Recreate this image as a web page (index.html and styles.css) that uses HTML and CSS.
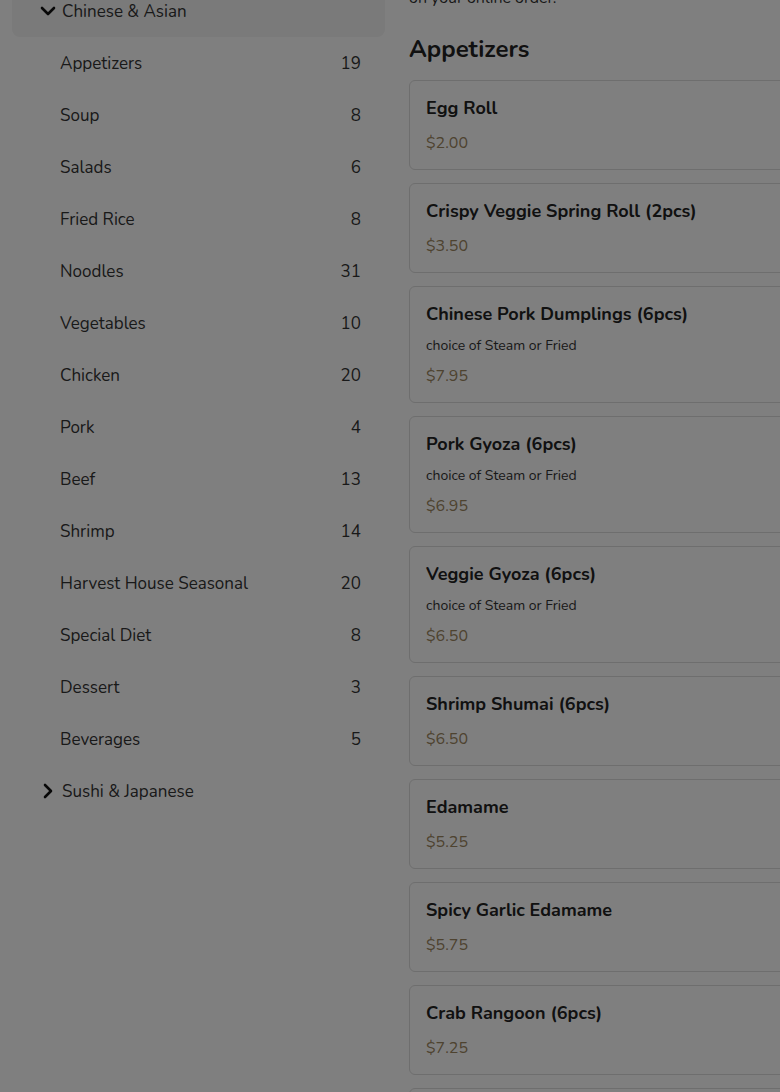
FILE: index.html
```html
<!DOCTYPE html>
<html lang="en">
<head>
<meta charset="utf-8">
<title>Menu</title>
<link rel="stylesheet" href="styles.css">
</head>
<body>
<div class="layout">
  <aside class="sidebar">
    <div class="group-head open">
      <svg class="chev" width="16" height="10" viewBox="0 0 16 10"><path d="M2 2 L8 8 L14 2" fill="none" stroke="#111" stroke-width="2.6" stroke-linecap="round" stroke-linejoin="round"/></svg>
      <span>Chinese &amp; Asian</span>
    </div>
    <ul class="cats">
      <li><span>Appetizers</span><span>19</span></li>
      <li><span>Soup</span><span>8</span></li>
      <li><span>Salads</span><span>6</span></li>
      <li><span>Fried Rice</span><span>8</span></li>
      <li><span>Noodles</span><span>31</span></li>
      <li><span>Vegetables</span><span>10</span></li>
      <li><span>Chicken</span><span>20</span></li>
      <li><span>Pork</span><span>4</span></li>
      <li><span>Beef</span><span>13</span></li>
      <li><span>Shrimp</span><span>14</span></li>
      <li><span>Harvest House Seasonal</span><span>20</span></li>
      <li><span>Special Diet</span><span>8</span></li>
      <li><span>Dessert</span><span>3</span></li>
      <li><span>Beverages</span><span>5</span></li>
    </ul>
    <div class="group-head">
      <svg class="chev right" width="16" height="16" viewBox="0 0 16 16"><path d="M5 2 L11 8 L5 14" fill="none" stroke="#111" stroke-width="2.6" stroke-linecap="round" stroke-linejoin="round"/></svg>
      <span>Sushi &amp; Japanese</span>
    </div>
  </aside>
  <main class="menu">
    <p class="note">Please let us know about any allergies or special requests<br>on your online order.</p>
    <h2>Appetizers</h2>
    <div class="items">
      <div class="card"><h3>Egg Roll</h3><div class="price">$2.00</div></div>
      <div class="card"><h3>Crispy Veggie Spring Roll (2pcs)</h3><div class="price">$3.50</div></div>
      <div class="card"><h3>Chinese Pork Dumplings (6pcs)</h3><p class="desc">choice of Steam or Fried</p><div class="price">$7.95</div></div>
      <div class="card"><h3>Pork Gyoza (6pcs)</h3><p class="desc">choice of Steam or Fried</p><div class="price">$6.95</div></div>
      <div class="card"><h3>Veggie Gyoza (6pcs)</h3><p class="desc">choice of Steam or Fried</p><div class="price">$6.50</div></div>
      <div class="card"><h3>Shrimp Shumai (6pcs)</h3><div class="price">$6.50</div></div>
      <div class="card"><h3>Edamame</h3><div class="price">$5.25</div></div>
      <div class="card"><h3>Spicy Garlic Edamame</h3><div class="price">$5.75</div></div>
      <div class="card"><h3>Crab Rangoon (6pcs)</h3><div class="price">$7.25</div></div>
      <div class="card"><h3>Chicken Wings (6pcs)</h3><div class="price">$8.95</div></div>
    </div>
  </main>
</div>
<div class="overlay"></div>
</body>
</html>
```
FILE: styles.css
```css
html, body {
  margin: 0;
  padding: 0;
  background: #fff;
  overflow: hidden;
  height: 100%;
}
body {
  font-family: "Nunito", "Lato", "Noto Sans", sans-serif;
  color: #333;
}
.layout {
  display: flex;
  align-items: flex-start;
  width: 1100px;
}
.sidebar {
  width: 373px;
  margin-left: 12px;
  margin-top: -15px;
  flex: none;
}
.group-head {
  height: 52px;
  display: flex;
  align-items: center;
  padding-left: 28px;
  gap: 6px;
  font-size: 17px;
  color: #333;
  box-sizing: border-box;
}
.group-head.open {
  background: #f4f4f4;
  border-radius: 0 0 8px 8px;
}
.chev { flex: none; }
.cats {
  list-style: none;
  margin: 0;
  padding: 0;
}
.cats li {
  height: 52px;
  display: flex;
  align-items: center;
  justify-content: space-between;
  padding: 0 24px 0 48px;
  font-size: 17px;
  color: #333;
}
.menu {
  margin-left: 24px;
  margin-top: -38px;
  width: 700px;
  flex: none;
}
.note {
  margin: 0;
  font-size: 16px;
  line-height: 24px;
}
h2 {
  margin: 23px 0 15px;
  font-size: 24px;
  line-height: 32px;
  font-weight: 700;
  color: #222;
}
.items {
  display: flex;
  flex-direction: column;
  gap: 13px;
}
.card {
  border: 1px solid #dcdcdc;
  border-radius: 6px;
  padding: 15px 16px 15px;
}
.card h3 {
  margin: 0;
  font-size: 18px;
  line-height: 24px;
  font-weight: 700;
  color: #222;
}
.desc {
  margin: 10px 0 0;
  font-size: 14px;
  line-height: 20px;
  color: #333;
}
.price {
  margin-top: 12px;
  font-size: 16px;
  line-height: 22px;
  color: #9c8660;
}
.desc + .price { margin-top: 9px; }
.overlay {
  position: fixed;
  inset: 0;
  background: rgba(0, 0, 0, 0.5);
}
```
